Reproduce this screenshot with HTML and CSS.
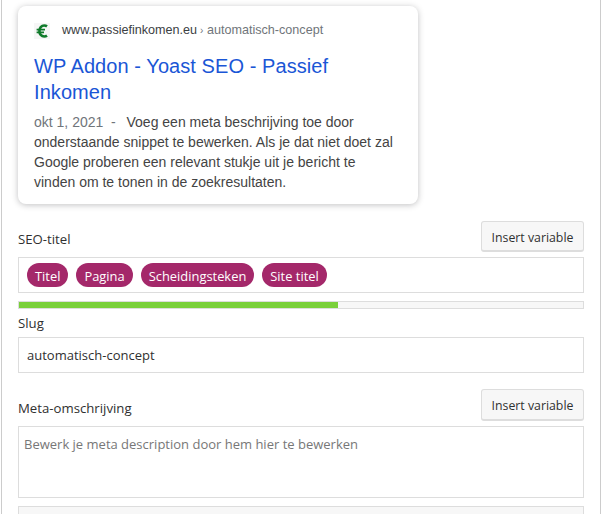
FILE: index.html
```html
<!DOCTYPE html>
<html lang="nl">
<head>
<meta charset="utf-8">
<title>Yoast SEO</title>
<link rel="stylesheet" href="styles.css">
</head>
<body>
<main class="panel">
  <section class="card">
    <div class="site">
      <svg class="favicon" width="16" height="16" viewBox="0 0 16 16"><rect width="16" height="16" fill="#f6f6f6"/><path d="M13 3.4C12.2 2.8 11.2 2.5 10.2 2.5 7.4 2.5 5.4 4.8 5.4 8s2 5.5 4.8 5.5c1 0 2-.3 2.8-.9" fill="none" stroke="#0f7a2a" stroke-width="2.6"/><path d="M2.6 6.6h8.4M2.6 9.4h7.4" stroke="#0f7a2a" stroke-width="1.7"/></svg>
      <span class="url">www.passiefinkomen.eu</span><span class="crumb"><span class="sep">›</span> automatisch-concept</span>
    </div>
    <h2 class="title">WP Addon - Yoast SEO - Passief Inkomen</h2>
    <p class="desc"><span class="date">okt 1, 2021 &nbsp;-&nbsp; </span>Voeg een meta beschrijving toe door onderstaande snippet te bewerken. Als je dat niet doet zal Google proberen een relevant stukje uit je bericht te vinden om te tonen in de zoekresultaten.</p>
  </section>

  <div class="row row-seo">
    <label class="label">SEO-titel</label>
    <button class="btn">Insert variable</button>
  </div>
  <div class="box pills">
    <span class="pill">Titel</span>
    <span class="pill">Pagina</span>
    <span class="pill">Scheidingsteken</span>
    <span class="pill">Site titel</span>
  </div>
  <div class="progress"><div class="bar" style="width:56.5%"></div></div>

  <label class="label slug-label">Slug</label>
  <div class="box slug">automatisch-concept</div>

  <div class="row row-meta">
    <label class="label">Meta-omschrijving</label>
    <button class="btn">Insert variable</button>
  </div>
  <div class="box area">Bewerk je meta description door hem hier te bewerken</div>
  <div class="progress last"></div>
</main>
</body>
</html>
```
FILE: styles.css
```css
* { box-sizing: border-box; }
html, body { margin: 0; height: 514px; overflow: hidden; background: #fff; }
body { font-family: "Open Sans", "Noto Sans", sans-serif; color: #303030; }
.panel {
  width: 600px;
  height: 514px;
  margin-left: 1px;
  padding: 6px 16px 0 16px;
  border-left: 1px solid #ccc;
  border-right: 1px solid #ccc;
  font-size: 13px;
}
.card {
  width: 400px;
  height: 198px;
  padding: 17px 20px 0 16px;
  border-radius: 8px;
  background: #fff;
  box-shadow: 0 1px 6px rgba(32, 33, 36, .28);
  font-family: "Liberation Sans", Arial, sans-serif;
}
.site { display: flex; align-items: center; height: 16px; font-size: 12.6px; white-space: pre; }
.favicon { margin: 0 12px 0 0; flex: none; }
.url { color: #3c4043; padding-bottom: 2px; }
.crumb { color: #70757a; margin-left: 3px; padding-bottom: 2px; }
.sep { font-size: 10px; }
.title {
  margin: 14px 0 0;
  font-size: 20px;
  font-weight: 400;
  line-height: 26px;
  letter-spacing: .07px;
  color: #1a56d6;
}
.desc { margin: 7px 0 0; font-size: 14px; line-height: 20px; color: #444; }
.date { color: #70757a; margin-right: 3px; }
.row { display: flex; justify-content: space-between; align-items: flex-end; }
.row-seo { margin-top: 17px; height: 31px; margin-bottom: 5px; }
.row-meta { margin-top: 16px; height: 32px; margin-bottom: 5px; }
.label { display: block; font-size: 13.2px; line-height: 18px; color: #303030; }
.row .label { margin-bottom: 4px; }
.btn {
  width: 103px;
  height: 100%;
  padding: 2px 0 0;
  border: 1px solid #ddd;
  border-bottom-width: 2px;
  border-radius: 3px;
  background: #f7f7f7;
  color: #303030;
  font: 12.3px "Open Sans", "Noto Sans", sans-serif;
}
.box {
  border: 1px solid #ddd;
  background: #fff;
}
.pills {
  display: flex;
  align-items: center;
  gap: 8px;
  height: 36px;
  padding: 0 8px;
}
.pill {
  height: 24px;
  padding: 1px 8px 0;
  border-radius: 12px;
  background: #a4286a;
  color: #fff;
  font-size: 12.9px;
  line-height: 24px;
}
.progress {
  height: 8px;
  margin-top: 8px;
  border: 1px solid #ddd;
  background: #f7f7f7;
}
.bar { height: 100%; background: #7ad03a; }
.slug-label { margin-top: 5px; }
.slug {
  display: flex;
  align-items: center;
  height: 36px;
  margin-top: 5px;
  padding: 0 8px;
  font-size: 13px;
}
.area {
  height: 72px;
  padding: 7px 5px;
  font-size: 13px;
  line-height: 20px;
  color: #777;
}
.last { height: 12px; }
```
